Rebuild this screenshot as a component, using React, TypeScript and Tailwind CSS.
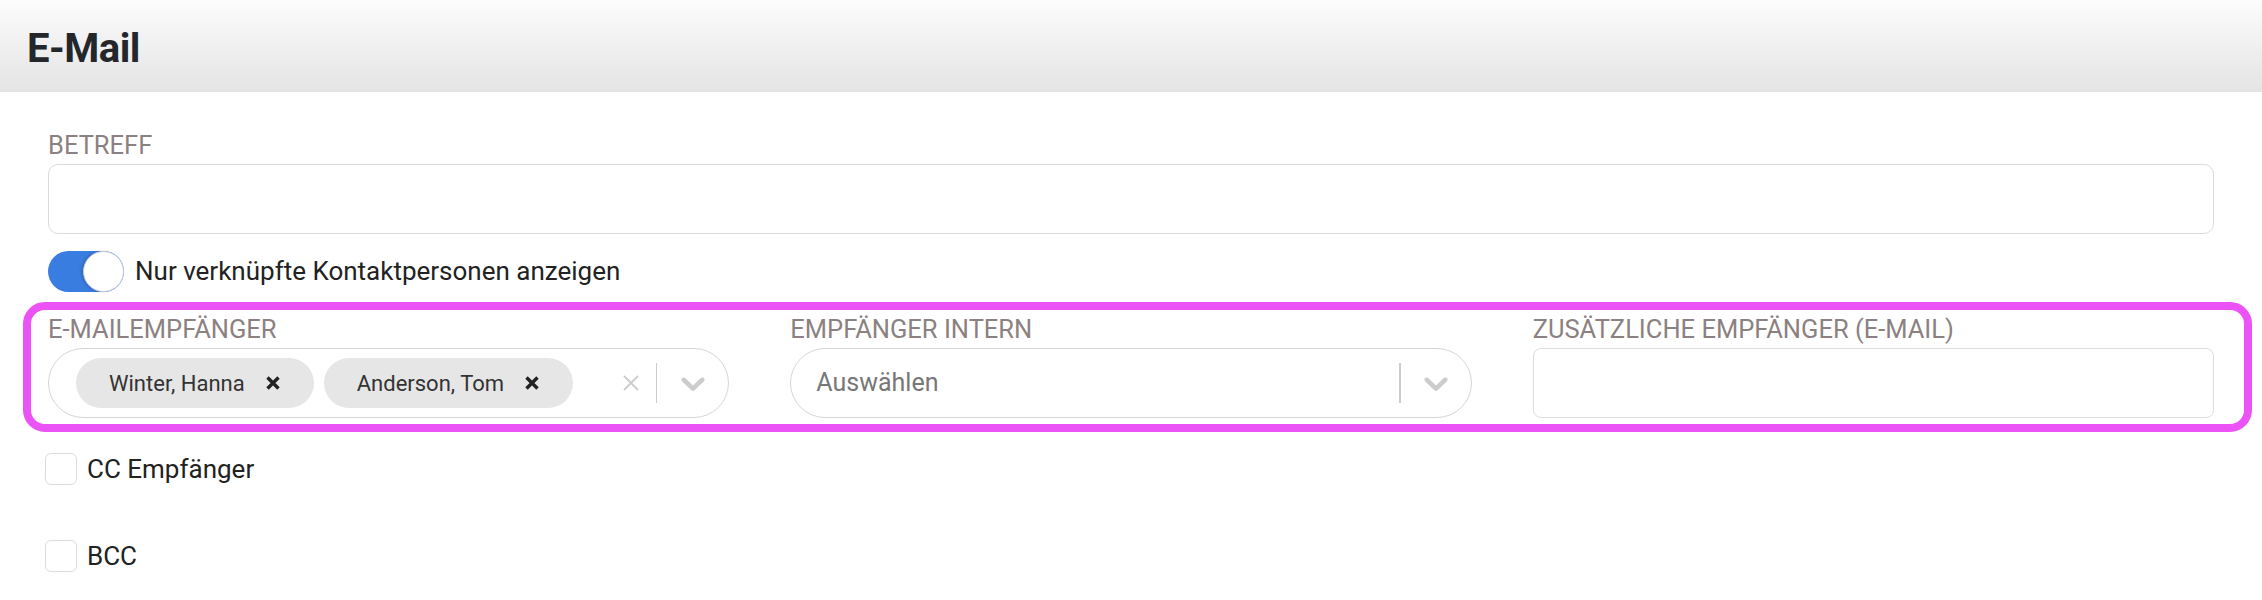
import React from 'react';

const font = "font-['Roboto','Liberation_Sans',sans-serif]";

const ChipX = () => (
  <svg width="14" height="14" viewBox="0 0 14 14" className="shrink-0">
    <path d="M1.5 1.5 L12.5 12.5 M12.5 1.5 L1.5 12.5" stroke="#222" strokeWidth="3.4" fill="none" />
  </svg>
);

const Chevron = () => (
  <svg width="40" height="40" viewBox="0 0 20 20" fill="#cccccc" className="shrink-0">
    <path d="M4.516 7.548c0.436-0.446 1.043-0.481 1.576 0l3.908 3.747 3.908-3.747c0.533-0.481 1.141-0.446 1.574 0 0.436 0.445 0.408 1.197 0 1.615-0.406 0.418-4.695 4.502-4.695 4.502-0.217 0.223-0.502 0.335-0.787 0.335s-0.57-0.112-0.789-0.335c0 0-4.287-4.084-4.695-4.502s-0.436-1.170 0-1.615z" />
  </svg>
);

const ClearX = () => (
  <svg width="16" height="16" viewBox="0 0 16 16" className="shrink-0">
    <path d="M1 1 L15 15 M15 1 L1 15" stroke="#cccccc" strokeWidth="1.8" fill="none" />
  </svg>
);

const Label = ({ children }: { children: React.ReactNode }) => (
  <div className="text-[25.5px] leading-[30px] text-[#8c8181] mb-[4px] whitespace-nowrap">{children}</div>
);

const Chip = ({ name }: { name: string }) => (
  <div className="h-[50px] rounded-full bg-[#e6e6e6] flex items-center pl-[33px] pr-[34px] gap-[21px]">
    <span className="text-[22px] text-[#333] whitespace-nowrap">{name}</span>
    <ChipX />
  </div>
);

const Checkbox = ({ label }: { label: string }) => (
  <div className="flex items-center gap-[10px] h-[32px]">
    <div className="w-[32px] h-[32px] rounded-[6px] border-[1.5px] border-[#dcdcdc] bg-white" />
    <span className="text-[26px] leading-[32px] text-[#222]">{label}</span>
  </div>
);

export default function App() {
  return (
    <div className={`w-[2262px] h-[600px] bg-white overflow-hidden ${font}`}>
      {/* Header */}
      <div className="h-[92px] bg-gradient-to-b from-[#fcfcfc] to-[#e4e4e4] flex items-center pl-[27px] pt-[5px]">
        <h1 className="text-[40px] leading-[40px] font-bold tracking-[-0.5px] text-[#23262a]">E-Mail</h1>
      </div>

      <div className="px-12 pt-[38px]">
        <Label>BETREFF</Label>
        <div className="h-[70px] rounded-[10px] border-[1.5px] border-[#d8dce1] bg-white" />

        {/* Toggle */}
        <div className="flex items-center gap-[11px] mt-[17px]">
          <div className="w-[76px] h-[41px] rounded-full bg-[#3a7de1] flex items-center justify-end">
            <div className="w-[41px] h-[41px] rounded-full bg-white border border-[#c9ced6] shadow-[-2px_0_3px_rgba(0,0,0,0.15)]" />
          </div>
          <span className="text-[26px] text-[#222]">Nur verknüpfte Kontaktpersonen anzeigen</span>
        </div>

        {/* Highlighted recipients row */}
        <div className="mt-[10px] ml-[-25px] mr-[-38px] border-[8px] border-[#eb53f6] rounded-[22px] pl-[17px] pr-[30px] pt-[4px] pb-[6px]">
          <div className="grid grid-cols-3 gap-[61px]">
            <div>
              <Label>E-MAILEMPFÄNGER</Label>
              <div className="h-[70px] rounded-full border-[1.5px] border-[#d6d6d6] flex items-center pl-[27px] pr-[15px]">
                <div className="flex items-center gap-[10px] flex-1">
                  <Chip name="Winter, Hanna" />
                  <Chip name="Anderson, Tom" />
                </div>
                <div className="flex items-center">
                  <ClearX />
                  <div className="w-[1.5px] h-[40px] bg-[#cccccc] ml-[17px] mr-[16px]" />
                  <Chevron />
                </div>
              </div>
            </div>

            <div>
              <Label>EMPFÄNGER INTERN</Label>
              <div className="h-[70px] rounded-full border-[1.5px] border-[#d6d6d6] flex items-center pl-[25px] pr-[15px]">
                <span className="flex-1 text-[25px] text-[#777]">Auswählen</span>
                <div className="w-[1.5px] h-[40px] bg-[#cccccc] mr-[15px]" />
                <Chevron />
              </div>
            </div>

            <div>
              <Label>ZUSÄTZLICHE EMPFÄNGER (E-MAIL)</Label>
              <div className="h-[70px] rounded-[8px] border-[1.5px] border-[#dcdce2] bg-white" />
            </div>
          </div>
        </div>

        <div className="mt-[21px] flex flex-col gap-[55px] ml-[-3px]">
          <Checkbox label="CC Empfänger" />
          <Checkbox label="BCC" />
        </div>
      </div>
    </div>
  );
}
